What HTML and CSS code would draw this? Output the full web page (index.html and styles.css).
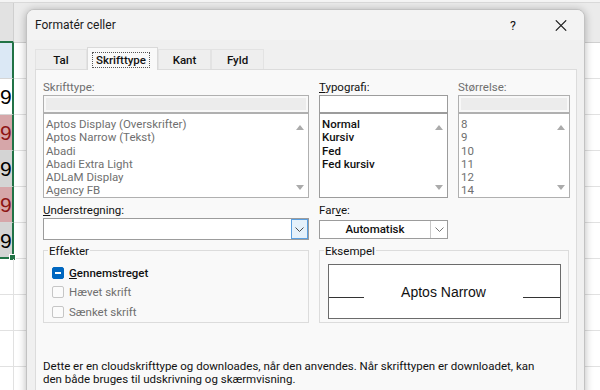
FILE: index.html
```
<!DOCTYPE html>
<html lang="da">
<head>
<meta charset="utf-8">
<title>Formatér celler</title>
<link rel="stylesheet" href="styles.css">
</head>
<body>
<div class="sheet">
  <div class="topband"></div>
  <div class="srow head"><div class="ca hsel"></div><div class="cb hcol"></div></div>
  <div class="srow"><div class="ca sel blue"></div><div class="cb"></div></div>
  <div class="srow"><div class="ca sel white">9</div><div class="cb"></div></div>
  <div class="srow"><div class="ca sel bad">9</div><div class="cb"></div></div>
  <div class="srow"><div class="ca sel grey">9</div><div class="cb"></div></div>
  <div class="srow"><div class="ca sel bad">9</div><div class="cb"></div></div>
  <div class="srow"><div class="ca sel grey last">9</div><div class="cb"></div></div>
  <div class="srow"><div class="ca"></div><div class="cb"></div></div>
  <div class="srow"><div class="ca"></div><div class="cb"></div></div>
  <div class="srow"><div class="ca"></div><div class="cb"></div></div>
  <div class="srow"><div class="ca"></div><div class="cb"></div></div>
</div>

<div class="dialog">
  <div class="titlebar">
    <span class="title">Formatér celler</span>
    <span class="tb-btn help">?</span>
    <span class="tb-btn close"><svg width="12" height="11" viewBox="0 0 12 11"><path d="M0.8 0.3 L11.2 10.7 M11.2 0.3 L0.8 10.7" stroke="#1a1a1a" stroke-width="1.1" fill="none"/></svg></span>
  </div>
  <div class="dbody">
    <div class="tabs">
      <div class="tab tab-tal">Tal</div>
      <div class="tab active tab-skrift"><span class="focus">Skrifttype</span></div>
      <div class="tab tab-kant">Kant</div>
      <div class="tab tab-fyld">Fyld</div>
    </div>
    <div class="panel">
      <div class="grid">
        <div class="fcol">
          <div class="lbl dis">Skrifttype:</div>
          <div class="tbox dis"></div>
          <div class="list dis">
            <div class="items">
              <div>Aptos Display (Overskrifter)</div>
              <div>Aptos Narrow (Tekst)</div>
              <div>Abadi</div>
              <div>Abadi Extra Light</div>
              <div>ADLaM Display</div>
              <div>Agency FB</div>
            </div>
            <div class="sbar"><i class="tri-up"></i><i class="tri-down"></i></div>
          </div>
        </div>
        <div class="fcol">
          <div class="lbl"><u>T</u>ypografi:</div>
          <div class="tbox"></div>
          <div class="list">
            <div class="items strong">
              <div>Normal</div>
              <div>Kursiv</div>
              <div>Fed</div>
              <div>Fed kursiv</div>
            </div>
            <div class="sbar"><i class="tri-up"></i><i class="tri-down"></i></div>
          </div>
        </div>
        <div class="fcol">
          <div class="lbl dis">Størrelse:</div>
          <div class="tbox dis"></div>
          <div class="list dis">
            <div class="items">
              <div>8</div>
              <div>9</div>
              <div>10</div>
              <div>11</div>
              <div>12</div>
              <div>14</div>
            </div>
            <div class="sbar"><i class="tri-up"></i><i class="tri-down"></i></div>
          </div>
        </div>

        <div class="fcol r2 c1">
          <div class="lbl"><u>U</u>nderstregning:</div>
          <div class="combo">
            <span class="cbtn focused"><svg width="9" height="5" viewBox="0 0 9 5"><path d="M0.5 0.5 L4.5 4.5 L8.5 0.5" stroke="#4a4a4a" fill="none" stroke-width="1"/></svg></span>
          </div>
        </div>
        <div class="fcol r2 c2">
          <div class="lbl">Far<u>v</u>e:</div>
          <div class="combo farve">
            <span class="val">Automatisk</span>
            <span class="cbtn plain"><svg width="9" height="5" viewBox="0 0 9 5"><path d="M0.5 0.5 L4.5 4.5 L8.5 0.5" stroke="#777" fill="none" stroke-width="1"/></svg></span>
          </div>
        </div>

        <div class="group effekter">
          <div class="legend">Effekter</div>
          <div class="checks">
            <div class="chk"><span class="box on"><span class="dash"></span></span><span class="ctext strong"><u>G</u>ennemstreget</span></div>
            <div class="chk"><span class="box"></span><span class="ctext dis">Hævet skrift</span></div>
            <div class="chk"><span class="box"></span><span class="ctext dis">Sænket skrift</span></div>
          </div>
        </div>
        <div class="group eksempel">
          <div class="legend">Eksempel</div>
          <div class="preview">
            <span class="pline"></span>
            <span class="ptext">Aptos Narrow</span>
            <span class="pline"></span>
          </div>
        </div>
      </div>
      <p class="note">Dette er en cloudskrifttype og downloades, når den anvendes. Når skrifttypen er downloadet, kan<br>den både bruges til udskrivning og skærmvisning.</p>
    </div>
  </div>
</div>
</body>
</html>
```
FILE: styles.css
```
html, body { margin: 0; padding: 0; }
body {
  width: 600px;
  height: 390px;
  overflow: hidden;
  position: relative;
  background: #ffffff;
  font-family: Roboto, "Noto Sans", sans-serif;
  font-size: 11.5px;
  color: #111111;
}

/* spreadsheet behind the dialog */
.sheet { display: flex; flex-direction: column; }
.topband { height: 3px; background: #f4f4f4; border-bottom: 1px solid #d9d9d9; box-sizing: border-box; }
.srow { display: flex; height: 36px; }
.srow.head { height: 40px; }
.ca {
  width: 14px; box-sizing: border-box;
  border-right: 1px solid #e1e1e1; border-bottom: 1px solid #e1e1e1;
  font-family: "Liberation Sans", sans-serif; font-size: 21px; line-height: 36px;
  text-align: right; padding-right: 2px; overflow: hidden; position: relative;
}
.cb { flex: 1; border-bottom: 1px solid #e1e1e1; }
.hsel { background: #e2e2e2; border-bottom: 2px solid #217346; border-right: 1px solid #cfcfcf; }
.hcol { background: #ebebeb; border-bottom: 1px solid #d0d0d0; }
.ca.sel { border-right: 2px solid #217346; border-bottom-color: #d5d5d5; }
.ca.blue { background: #dbe8f5; }
.ca.white { background: #ffffff; color: #000; }
.ca.bad { background: #d6a6a9; color: #8e1515; }
.ca.grey { background: #d4d4d4; color: #000; }
.ca.last { border-bottom: 2px solid #217346; overflow: visible; }
.ca.last::after {
  content: ""; position: absolute; right: -4px; bottom: -4px;
  width: 5px; height: 5px; background: #217346; border: 1px solid #fff;
}

/* dialog window */
.dialog {
  position: absolute; left: 26px; top: 9px;
  width: 559px; height: 400px; box-sizing: border-box;
  border: 1px solid #c2c2c2; border-radius: 8px 8px 0 0;
  background: #f0f0f0;
  box-shadow: 0 1px 9px rgba(0, 0, 0, 0.28);
  overflow: hidden;
}
.titlebar { height: 30px; display: flex; align-items: center; background: #f3f3f3; }
.title { flex: 1; padding-left: 8px; font-size: 12px; color: #1b1b1b; }
.tb-btn { width: 46px; height: 30px; display: flex; align-items: center; justify-content: center; }
.help { margin-right: 0; padding-right: 2px; font-size: 12.5px; }

.dbody { padding: 7px 7px 0 8px; }
.tabs { display: flex; align-items: flex-end; height: 22px; }
.tab {
  height: 20px; box-sizing: border-box; padding-top: 1px;
  border: 1px solid #e3e3e3; border-bottom: none;
  background: #eeeeee;
  display: flex; align-items: center; justify-content: center;
  font-weight: 500; color: #111;
}
.tab-tal { width: 52px; }
.tab-skrift { width: 71px; }
.tab-kant { width: 53px; }
.tab-fyld { width: 53px; }
.tab.active {
  height: 23px; margin-bottom: -1px; padding: 0 0 2px 0;
  align-items: flex-end;
  background: #f9f9f9; border-color: #d9d9d9;
  position: relative; z-index: 1;
}
.focus { border: 1px dotted #555; padding: 0 3px; line-height: 14px; margin-right: 3px; }

.panel {
  background: #f9f9f9; border: 1px solid #dcdcdc;
  padding: 10px 6px 0 7px; height: 400px;
}
.grid { display: grid; grid-template-columns: 266px 129px 112px; column-gap: 10px; }
.fcol { display: flex; flex-direction: column; }
.c1 { grid-column: 1; }
.c2 { grid-column: 2; }
.lbl { height: 14px; line-height: 14px; margin-bottom: 1px; color: #111; }
.lbl.dis, .dis { color: #6f6f6f; }
u { text-decoration-thickness: 1px; text-underline-offset: 1px; }

.tbox { height: 18px; box-sizing: border-box; border: 1px solid #9c9c9c; background: #fff; }
.tbox.dis { border-color: #b0b0b0; background: #ececec; box-shadow: inset 0 0 0 2px #f8f8f8; }
.list { height: 85px; box-sizing: border-box; border: 1px solid #9c9c9c; background: #fff; display: flex; }
.list.dis { border-color: #b0b0b0; }
.items { flex: 1; padding: 4px 0 0 2px; line-height: 13.3px; white-space: nowrap; }
.strong { font-weight: 500; color: #111; }
.sbar {
  width: 17px; display: flex; flex-direction: column;
  justify-content: space-between; align-items: center;
  padding: 11px 0 7px;
}
.tri-up { width: 0; height: 0; border-left: 4.5px solid transparent; border-right: 4.5px solid transparent; border-bottom: 5px solid #ababab; }
.tri-down { width: 0; height: 0; border-left: 4.5px solid transparent; border-right: 4.5px solid transparent; border-top: 5px solid #ababab; }

.r2 { margin-top: 5px; }
.combo {
  height: 22px; box-sizing: border-box; border: 1px solid #9c9c9c;
  background: #fff; display: flex; justify-content: flex-end;
}
.cbtn { width: 17px; box-sizing: border-box; display: flex; align-items: center; justify-content: center; }
.cbtn.focused { background: #e5f1fb; border: 1px solid #5a9fe0; }
.cbtn.plain { border-left: 1px solid #c8c8c8; }
.combo.farve { height: 19px; margin-top: 2px; }
.val { flex: 1; text-align: center; line-height: 17px; font-weight: 500; }

.group {
  margin-top: 10px; height: 73px; box-sizing: border-box;
  border: 1px solid #dcdcdc;
}
.effekter { grid-column: 1; }
.eksempel { grid-column: 2 / 4; margin-right: 1px; }
.legend {
  display: block; width: fit-content;
  margin: -7px 0 0 4px; padding: 0 1px;
  line-height: 14px; background: #f9f9f9; color: #111;
}
.checks { margin-top: 5px; padding-left: 8px; }
.chk { display: flex; align-items: center; height: 19.5px; gap: 5px; }
.box {
  width: 12px; height: 12px; box-sizing: border-box;
  border: 1px solid #c6c6c6; border-radius: 2px; background: #fbfbfb;
}
.box.on { background: #0067c0; border-color: #0067c0; display: flex; align-items: center; justify-content: center; }
.dash { width: 6px; height: 1.5px; background: #fff; }

.preview {
  margin: 6px 7px 0 8px; height: 55px; box-sizing: border-box;
  border: 1px solid #6b6b6b; background: #fff;
  display: grid; grid-template-columns: 35px 1fr 37px; align-items: center;
}
.pline { height: 1px; background: #333; margin-top: 11px; }
.ptext { text-align: center; font-family: "Liberation Sans", sans-serif; font-size: 14px; color: #111; }

.note { margin: 37px 0 0; line-height: 13px; white-space: nowrap; color: #111; }
```
